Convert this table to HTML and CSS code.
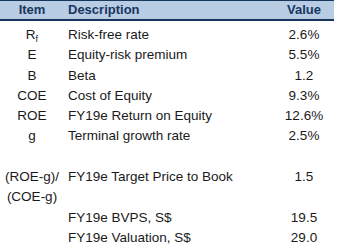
FILE: index.html
```html
<!DOCTYPE html>
<html>
<head>
<meta charset="utf-8">
<link rel="stylesheet" href="styles.css">
</head>
<body>
<div class="table">
  <div class="row head">
    <div class="item">Item</div>
    <div class="desc">Description</div>
    <div class="val">Value</div>
  </div>
  <div class="row first">
    <div class="item">R<sub>f</sub></div>
    <div class="desc">Risk-free rate</div>
    <div class="val">2.6%</div>
  </div>
  <div class="row">
    <div class="item">E</div>
    <div class="desc">Equity-risk premium</div>
    <div class="val">5.5%</div>
  </div>
  <div class="row">
    <div class="item">B</div>
    <div class="desc">Beta</div>
    <div class="val">1.2</div>
  </div>
  <div class="row">
    <div class="item">COE</div>
    <div class="desc">Cost of Equity</div>
    <div class="val">9.3%</div>
  </div>
  <div class="row">
    <div class="item">ROE</div>
    <div class="desc">FY19e Return on Equity</div>
    <div class="val">12.6%</div>
  </div>
  <div class="row">
    <div class="item">g</div>
    <div class="desc">Terminal growth rate</div>
    <div class="val">2.5%</div>
  </div>
  <div class="row blank"></div>
  <div class="row">
    <div class="item">(ROE-g)/</div>
    <div class="desc">FY19e Target Price to Book</div>
    <div class="val">1.5</div>
  </div>
  <div class="row">
    <div class="item">(COE-g)</div>
    <div class="desc"></div>
    <div class="val"></div>
  </div>
  <div class="row">
    <div class="item"></div>
    <div class="desc">FY19e BVPS, S$</div>
    <div class="val">19.5</div>
  </div>
  <div class="row">
    <div class="item"></div>
    <div class="desc">FY19e Valuation, S$</div>
    <div class="val">29.0</div>
  </div>
</div>
</body>
</html>
```
FILE: styles.css
```css
html, body {
  margin: 0;
  padding: 0;
  background: #ffffff;
}
body {
  font-family: "Liberation Sans", Arial, sans-serif;
  font-size: 13.5px;
  color: #1a1a1a;
}
.table {
  width: 334px;
}
.row {
  display: grid;
  grid-template-columns: 64px 1fr 60px;
  height: 20.3px;
  line-height: 20px;
  white-space: nowrap;
}
.row.first {
  margin-top: 4px;
}
.head {
  background: #b8cce4;
  border-top: 1px solid #17375e;
  border-bottom: 2px solid #17375e;
  height: 18px;
  line-height: 18px;
  color: #17375e;
  font-weight: bold;
  font-size: 13px;
}
.item {
  text-align: center;
}
.desc {
  padding-left: 4px;
}
.val {
  text-align: center;
}
sub {
  font-size: 9px;
  line-height: 0;
  vertical-align: -3px;
}
```
